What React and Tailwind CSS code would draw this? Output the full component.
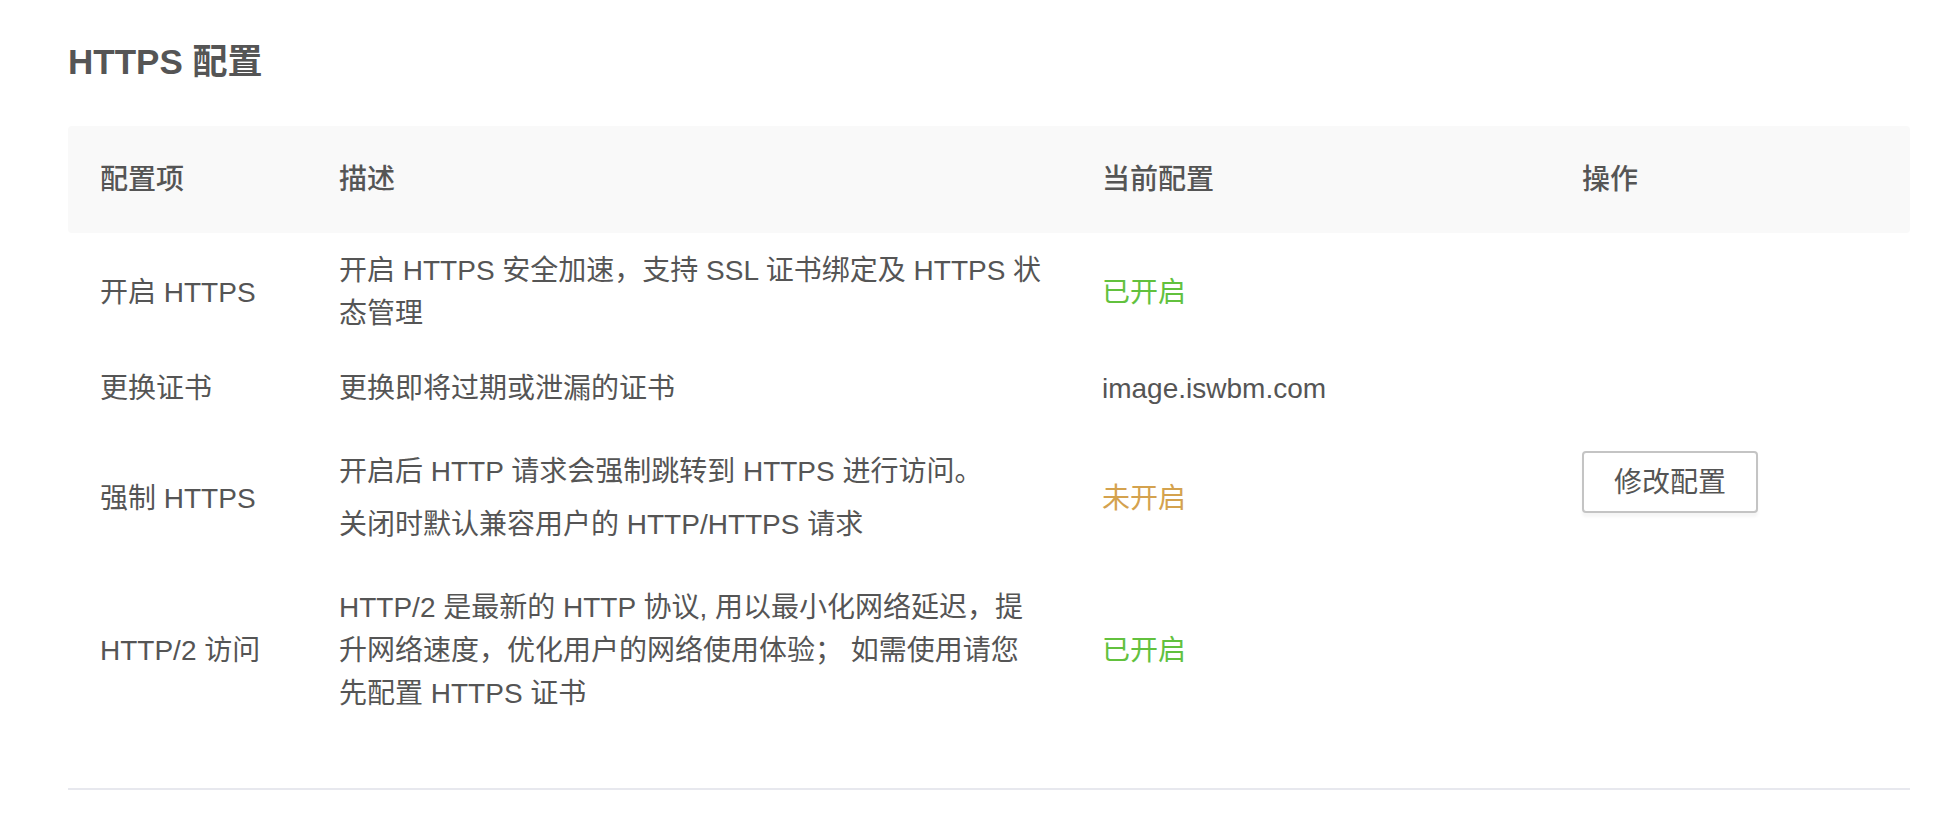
import React from 'react';

const rows = [
  {
    name: '开启 HTTPS',
    desc: [['开启 HTTPS 安全加速，支持 SSL 证书绑定及 HTTPS 状', '态管理']],
    value: '已开启',
    tone: 'on',
  },
  {
    name: '更换证书',
    desc: [['更换即将过期或泄漏的证书']],
    value: 'image.iswbm.com',
    tone: 'plain',
  },
  {
    name: '强制 HTTPS',
    desc: [['开启后 HTTP 请求会强制跳转到 HTTPS 进行访问。'], ['关闭时默认兼容用户的 HTTP/HTTPS 请求']],
    value: '未开启',
    tone: 'off',
  },
  {
    name: 'HTTP/2 访问',
    desc: [['HTTP/2 是最新的 HTTP 协议, 用以最小化网络延迟，提', '升网络速度，优化用户的网络使用体验； 如需使用请您', '先配置 HTTPS 证书']],
    value: '已开启',
    tone: 'on',
  },
];

const toneClass = {
  on: 'text-[#62c13e]',
  off: 'text-[#d4a24e]',
  plain: 'text-[#555555]',
};

const App = () => {
  return (
    <div
      className="min-h-screen w-full bg-white text-[#555555] pl-[68px] pr-[36px] pt-[35px]"
      style={{ fontFamily: '"Liberation Sans", "Noto Sans CJK SC", sans-serif' }}
    >
      <h1 className="text-[35px] leading-[54px] font-semibold text-[#555555]">HTTPS 配置</h1>

      <div className="mt-[37px]">
        {/* table head */}
        <div className="grid grid-cols-[239px_763px_480px_1fr] items-center h-[107px] bg-[#f9f9f9] rounded-[4px] text-[28px] font-medium">
          <div className="pl-8">配置项</div>
          <div className="pl-8">描述</div>
          <div className="pl-8">当前配置</div>
          <div className="pl-8">操作</div>
        </div>

        {/* table body */}
        <div className="grid grid-cols-[239px_763px_480px_1fr] items-center text-[28px] leading-[43px]">
          <div className="col-start-4 row-start-1 row-span-4 self-center pl-8">
            <button className="w-[176px] h-[62px] border-2 border-[#c4c4c4] rounded-[4px] bg-white text-[28px] text-[#555555] shadow-[0_4px_3px_rgba(0,0,0,0.04)]">
              修改配置
            </button>
          </div>
          {rows.map((row, i) => (
            <React.Fragment key={i}>
              <div className="pl-8 py-4">{row.name}</div>
              <div className={`pl-8 pr-8 ${row.desc.length > 1 ? 'py-[24px] flex flex-col gap-[10px]' : 'py-4'}`}>
                {row.desc.map((para, j) => (
                  <p key={j}>
                    {para.map((line, k) => (
                      <span key={k} className="block whitespace-nowrap">{line}</span>
                    ))}
                  </p>
                ))}
              </div>
              <div className={`pl-8 py-4 ${toneClass[row.tone]}`}>{row.value}</div>
            </React.Fragment>
          ))}
        </div>

        <div className="mt-[57px] h-[2px] bg-[#e7e8ee]" />
      </div>
    </div>
  );
};

export default App;
